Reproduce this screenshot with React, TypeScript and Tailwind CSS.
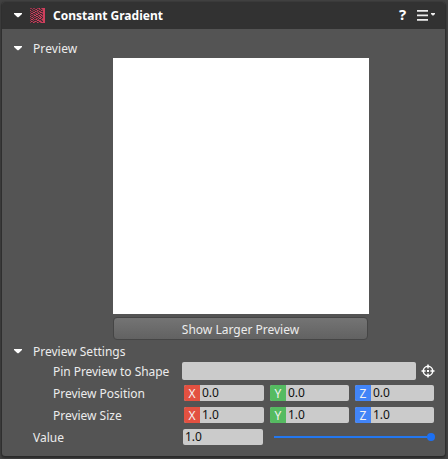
import React from "react";

function Arrow({ className = "" }: { className?: string }) {
  return (
    <svg className={`h-[5px] w-[8px] shrink-0 ${className}`} viewBox="0 0 8 5" fill="#fff">
      <path d="M0 0H8V1L4.5 4.3H3.5L0 1Z" />
    </svg>
  );
}

// Dither pattern: 0 background, 1 dim, 2 bright; density rises to the right.
const ICON_ROWS = [
  "110110011201222",
  "001001200110122",
  "200110021002122",
  "011002110210022",
  "100220011022122",
  "022001102100122",
  "100110220021022",
  "011022001202122",
  "200100220120122",
  "012011002012022",
  "100200110220122",
  "022011201001222",
  "100100022110122",
  "021012100221022",
  "100210021012222",
];
const ICON_FILL = ["#3c2a2f", "#94374b", "#cf3f5d"];

function GradientIcon() {
  return (
    <svg className="ml-[8px] mr-px h-[15px] w-[15px] shrink-0" viewBox="0 0 15 15" shapeRendering="crispEdges">
      {ICON_ROWS.map((row, y) =>
        row.split("").map((c, x) => (
          <rect key={`${x}-${y}`} x={x} y={y} width="1" height="1" fill={ICON_FILL[Number(c)]} />
        ))
      )}
    </svg>
  );
}

function Axis({ name, value, color, width }: { name: string; value: string; color: string; width: string }) {
  return (
    <div className={`flex h-4 overflow-hidden rounded-[2px] bg-[#cbcbcb] ${width}`}>
      <div className={`flex w-4 shrink-0 items-center justify-center pt-px text-[12px] leading-4 text-[#f3f3f3] ${color}`}>{name}</div>
      <div className="pl-[2px] text-[12px] leading-4 text-[#111]">{value}</div>
    </div>
  );
}

function Vector({ label, value }: { label: string; value: string }) {
  return (
    <div className="flex h-[22px] items-center">
      <div className="w-[131px] pt-[2px] tracking-[-0.02px]">{label}</div>
      <div className="flex gap-[6px]">
        <Axis name="X" value={value} color="bg-[#e35141]" width="w-[80px]" />
        <Axis name="Y" value={value} color="bg-[#55bb61]" width="w-[79px]" />
        <Axis name="Z" value={value} color="bg-[#4285f8]" width="w-[79px]" />
      </div>
    </div>
  );
}

export default function App() {
  return (
    <div className="h-[459px] w-[448px] overflow-hidden bg-[#424242] pl-[2px] pt-[2px] font-['Noto_Sans','Open_Sans',sans-serif] text-[12px] leading-4 text-[#ececec]">
      <div className="h-[454px] w-[443px] overflow-hidden rounded-[3px] bg-[#545454] shadow-[0_1px_2px_1px_#292929]">
        <header className="flex h-[27px] items-center bg-[#323232] pl-3">
          <Arrow />
          <GradientIcon />
          <h1 className="ml-[7px] font-bold text-white">Constant Gradient</h1>
          <span className="ml-auto w-2 pb-[3px] text-[15px] font-bold leading-4 text-white">?</span>
          <svg className="ml-[10px] mr-[9px] h-[11px] w-[19px]" viewBox="0 0 19 11" fill="#ededed">
            <path d="M0 0h11v1.7H0zM0 4.5h11v1.8H0zM0 9h11v1.7H0zM14 3h4v1l-1.5 1.5h-1L14 4z" />
          </svg>
        </header>
        <div className="flex h-[29px] items-center pl-3 pt-[10px]">
          <Arrow />
          <span className="ml-[11px] pt-px tracking-[0.1px]">Preview</span>
        </div>
        <div className="ml-[111px] h-[256px] w-[256px] bg-white" />
        <button className="ml-[111px] mt-[3px] block h-[23px] w-[255px] rounded-[4px] border border-[#454545] bg-linear-to-b from-[#747474] to-[#626262] pt-[2px] leading-4">
          Show Larger Preview
        </button>
        <div className="flex h-[20px] items-center pl-3 pt-[2px]">
          <Arrow />
          <span className="ml-[11px] pt-px">Preview Settings</span>
        </div>
        <div className="pl-[51px]">
          <div className="flex h-[22px] items-center">
            <div className="w-[129px] pt-[2px] tracking-[-0.05px]">Pin Preview to Shape</div>
            <div className="h-[18px] w-[234px] rounded-[2px] bg-[#cbcbcb]" />
            <svg className="ml-[5px] h-[14px] w-[14px]" viewBox="0 0 14 14" fill="none" stroke="#fff" strokeWidth="1.5">
              <circle cx="7" cy="7" r="4.7" />
              <path d="M7 0.5V4.6M7 9.4V13.5M0.5 7H4.6M9.4 7H13.5" />
              <rect x="6" y="6" width="2" height="2" fill="#fff" stroke="none" />
            </svg>
          </div>
          <Vector label="Preview Position" value="0.0" />
          <Vector label="Preview Size" value="1.0" />
        </div>
        <div className="flex h-[22px] items-center pl-[31px]">
          <div className="w-[150px] pt-[2px]">Value</div>
          <div className="h-4 w-[80px] rounded-[2px] bg-[#cbcbcb] pl-[2px] leading-4 text-[#111]">1.0</div>
          <div className="ml-[11px] flex w-[161px] items-center">
            <div className="h-[2px] flex-1 bg-[#2377ef]" />
            <div className="h-2 w-2 rounded-full bg-[#1d70f3]" />
          </div>
        </div>
      </div>
    </div>
  );
}
